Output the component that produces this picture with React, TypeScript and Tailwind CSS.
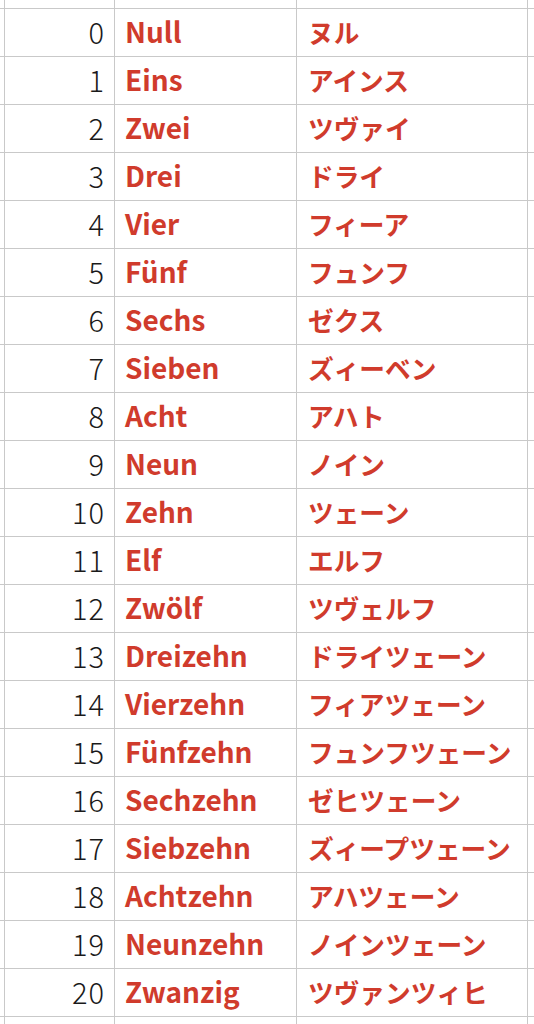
const rows: [number, string, string][] = [
  [0, "Null", "ヌル"],
  [1, "Eins", "アインス"],
  [2, "Zwei", "ツヴァイ"],
  [3, "Drei", "ドライ"],
  [4, "Vier", "フィーア"],
  [5, "Fünf", "フュンフ"],
  [6, "Sechs", "ゼクス"],
  [7, "Sieben", "ズィーベン"],
  [8, "Acht", "アハト"],
  [9, "Neun", "ノイン"],
  [10, "Zehn", "ツェーン"],
  [11, "Elf", "エルフ"],
  [12, "Zwölf", "ツヴェルフ"],
  [13, "Dreizehn", "ドライツェーン"],
  [14, "Vierzehn", "フィアツェーン"],
  [15, "Fünfzehn", "フュンフツェーン"],
  [16, "Sechzehn", "ゼヒツェーン"],
  [17, "Siebzehn", "ズィープツェーン"],
  [18, "Achtzehn", "アハツェーン"],
  [19, "Neunzehn", "ノインツェーン"],
  [20, "Zwanzig", "ツヴァンツィヒ"],
];

const font = { fontFamily: '"Noto Sans CJK JP", "Noto Sans", sans-serif' };

function EdgeRow({ h }: { h: string }) {
  return (
    <>
      <div className={`bg-white ${h}`} />
      <div className={`bg-white ${h}`} />
      <div className={`bg-white ${h}`} />
      <div className={`bg-white ${h}`} />
      <div className={`bg-white ${h}`} />
    </>
  );
}

export default function App() {
  return (
    <div className="h-[1024px] w-[534px] overflow-hidden bg-white" style={font}>
      <div className="grid grid-cols-[4px_109px_181px_230px_10px] gap-px bg-[#c9c9c9]">
        <EdgeRow h="h-2" />
        {rows.map(([n, de, ja]) => (
          <div key={n} className="contents">
            <div className="h-[47px] bg-white" />
            <div className="flex h-[47px] items-center justify-end bg-white pb-[3px] pr-[9px] text-[29px] font-light leading-none tracking-[1px] text-[#1a1a1a]">
              {n}
            </div>
            <div className="flex h-[47px] items-center bg-white pb-[3px] pl-[10px] text-[28px] font-bold leading-none text-[#d03b2c]">
              {de}
            </div>
            <div className="flex h-[47px] items-center bg-white pb-[2px] pl-[11px] text-[25.7px] font-bold leading-none text-[#d03b2c]">
              {ja}
            </div>
            <div className="h-[47px] bg-white" />
          </div>
        ))}
        <EdgeRow h="h-4" />
      </div>
    </div>
  );
}
